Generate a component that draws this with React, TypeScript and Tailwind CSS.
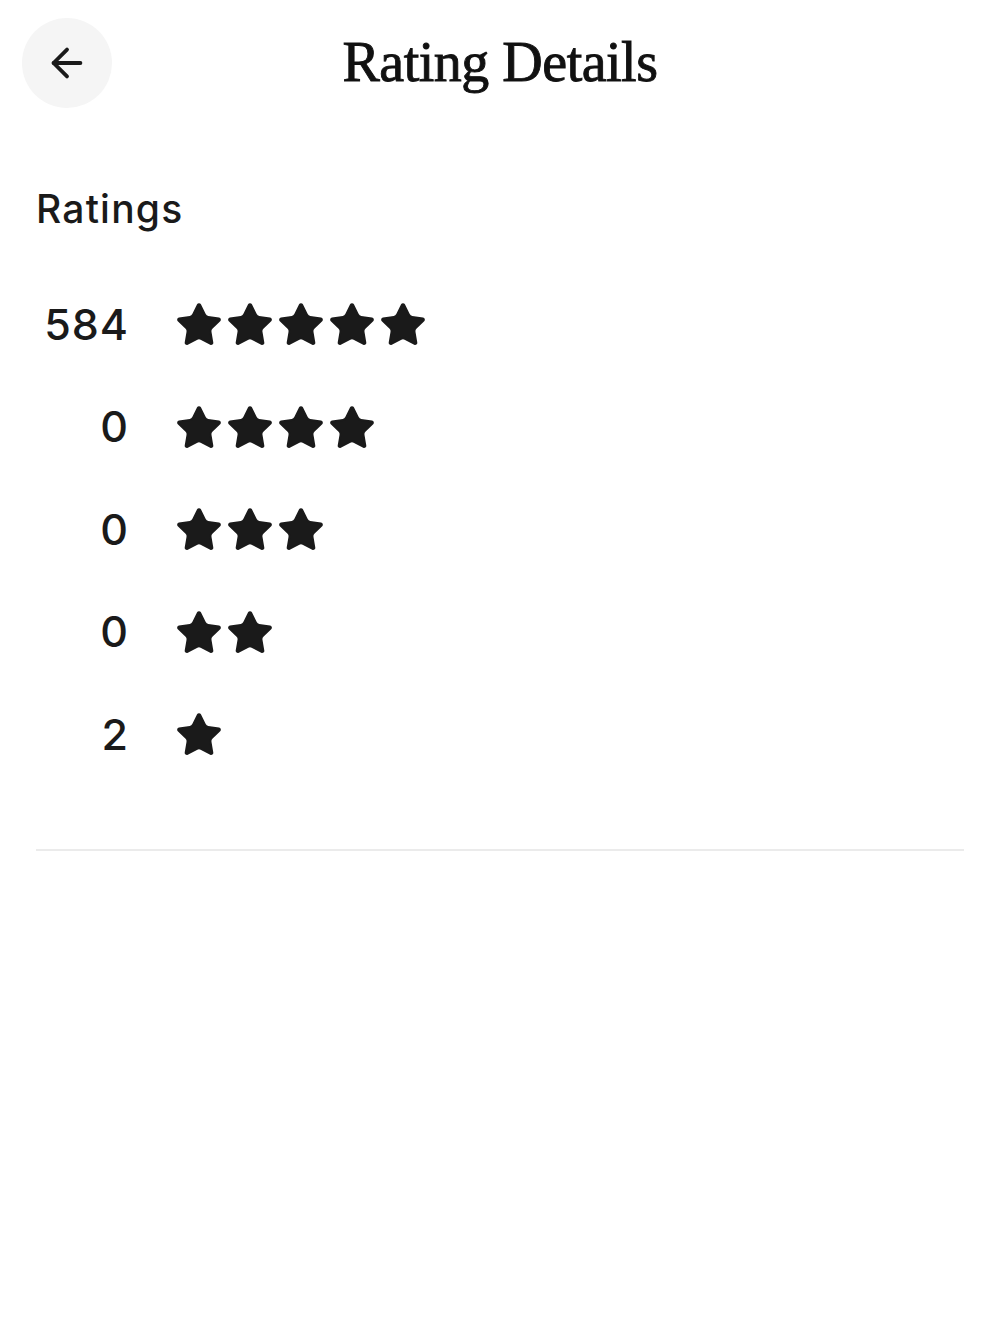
import React from "react";

const Star = () => (
  <svg width="50" height="50" viewBox="0 0 24 24" className="text-[#1a1a1a]" fill="currentColor" stroke="currentColor" strokeWidth="1" strokeLinejoin="round">
    <path d="M11.525 2.295a.53.53 0 0 1 .95 0l2.31 4.679a2.123 2.123 0 0 0 1.595 1.16l5.166.756a.53.53 0 0 1 .294.904l-3.736 3.638a2.123 2.123 0 0 0-.611 1.878l.882 5.14a.53.53 0 0 1-.771.56l-4.618-2.428a2.122 2.122 0 0 0-1.973 0L6.396 21.01a.53.53 0 0 1-.77-.56l.881-5.139a2.122 2.122 0 0 0-.611-1.879L2.16 9.795a.53.53 0 0 1 .294-.906l5.165-.755a2.122 2.122 0 0 0 1.597-1.16z" />
  </svg>
);

const rows = [
  { count: "584", stars: 5 },
  { count: "0", stars: 4 },
  { count: "0", stars: 3 },
  { count: "0", stars: 2 },
  { count: "2", stars: 1 },
];

export default function App() {
  return (
    <div className="w-[1000px] h-[1333px] bg-white text-[#1a1a1a]" style={{ fontFamily: "Inter, 'Noto Sans', sans-serif" }}>
      <div className="relative h-[126px] flex items-center justify-center">
        <button className="absolute left-[22px] top-[18px] w-[90px] h-[90px] rounded-full bg-[#f5f5f5] flex items-center justify-center">
          <svg width="46" height="46" viewBox="0 0 24 24" fill="none" stroke="#1a1a1a" strokeWidth="2" strokeLinecap="round" strokeLinejoin="round">
            <path d="M19 12H5" />
            <path d="M12 19l-7-7 7-7" />
          </svg>
        </button>
        <h1 className="text-[56px] leading-none tracking-[-0.5px] pb-[2px] text-[#111111] [-webkit-text-stroke:0.9px_#111111]" style={{ fontFamily: "'Liberation Serif', 'DejaVu Serif', serif" }}>
          Rating Details
        </h1>
      </div>
      <div className="px-[36px]">
        <div className="pt-[63px] text-[39px] font-medium leading-none tracking-[1.2px]">Ratings</div>
        <div className="pt-[46px] flex flex-col">
          {rows.map((r, i) => (
            <div key={i} className="h-[102.5px] flex items-center">
              <div className="w-[93px] text-right text-[43px] font-medium leading-none tracking-[1px] pb-[2px]">{r.count}</div>
              <div className="ml-[45px] flex gap-[1px]">
                {Array.from({ length: r.stars }).map((_, j) => (
                  <Star key={j} />
                ))}
              </div>
            </div>
          ))}
        </div>
        <div className="mt-[62px] h-[2px] bg-[#ebebeb]" />
      </div>
    </div>
  );
}
